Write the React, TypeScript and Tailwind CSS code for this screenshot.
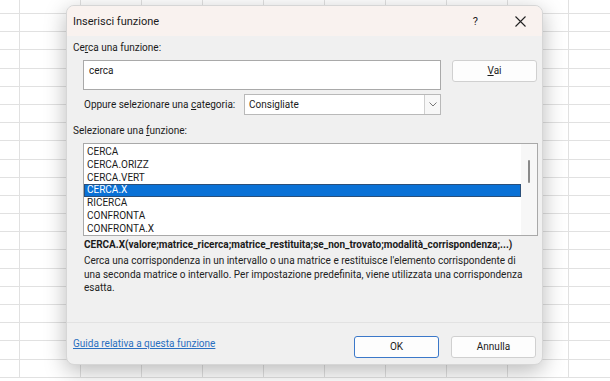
import React from "react";

const FONT = "font-['Segoe_UI','Roboto','Noto_Sans',sans-serif]";

const functions = [
  "CERCA",
  "CERCA.ORIZZ",
  "CERCA.VERT",
  "CERCA.X",
  "RICERCA",
  "CONFRONTA",
  "CONFRONTA.X",
];

const SELECTED = "CERCA.X";

// worksheet behind the dialog
const COLS = [20, 61, 61, 61, 61, 61, 61, 61, 61, 61, 61];
const ROWS = 21;

const Sheet: React.FC = () => (
  <div className="flex flex-col w-full h-full">
    {Array.from({ length: ROWS }).map((_, r) => (
      <div key={r} className={`flex shrink-0 ${r === 0 ? "h-[14px]" : "h-[18.2px]"}`}>
        {COLS.map((w, c) => (
          <div
            key={c}
            className="shrink-0 h-full border-r border-b border-[#e1e1e1]"
            style={{ width: w }}
          />
        ))}
      </div>
    ))}
  </div>
);

const App: React.FC = () => {
  return (
    <div className={`relative w-[610px] h-[381px] overflow-hidden bg-white text-[#1b1b1b] ${FONT}`}>
      <Sheet />

      {/* dialog over the worksheet */}
      <div className="absolute left-[66px] top-[5px] w-[477px] h-[360px] rounded-[8px] bg-[#f0f0f0] border border-[#d6d6d6] shadow-[0_6px_22px_rgba(0,0,0,0.28)] overflow-hidden flex flex-col">
        <div className="h-[30px] shrink-0 bg-[#f9f2ef] flex items-center pl-[6px]">
          <span className="text-[11px] leading-none">Inserisci funzione</span>
          <span className="ml-auto text-[11px] leading-none mr-[37px]">?</span>
          <svg width="11" height="11" viewBox="0 0 11 11" className="mr-[16px]">
            <path d="M0.5 0.5 L10.5 10.5 M10.5 0.5 L0.5 10.5" stroke="#222" strokeWidth="1.1" />
          </svg>
        </div>

        <div className="flex-1 flex flex-col pl-[6px] text-[10px]">
          <div className="mt-[4px] h-[16px] leading-[16px]">
            Ce<span className="underline">r</span>ca una funzione:
          </div>

          <div className="mt-[4px] flex items-start">
            <div className="ml-[10px] w-[358px] h-[30px] bg-white border border-[#a9a9a9] px-[5px] pt-[3px] leading-[14px]">
              cerca
            </div>
            <button className="ml-[11px] w-[85px] h-[22px] rounded-[3px] bg-[#fdfdfd] border border-[#d0d0d0] leading-none">
              <span className="underline">V</span>ai
            </button>
          </div>

          <div className="mt-[4px] flex items-center">
            <span className="ml-[11px] w-[160px] whitespace-nowrap">
              Oppure selezionare una <span className="underline">c</span>ategoria:
            </span>
            <div className="w-[197px] h-[21px] bg-white border border-[#b9b9b9] flex items-center">
              <span className="pl-[4px]">Consigliate</span>
              <div className="ml-auto w-[16px] h-full border-l border-[#cfcfcf] bg-[#f7f7f7] flex items-center justify-center">
                <svg width="8" height="5" viewBox="0 0 8 5">
                  <path d="M0.5 0.5 L4 4 L7.5 0.5" fill="none" stroke="#777" strokeWidth="1" />
                </svg>
              </div>
            </div>
          </div>

          <div className="mt-[8px] h-[16px] leading-[16px]">
            Selezionare una <span className="underline">f</span>unzione:
          </div>

          <div className="mt-[4px] ml-[10px] w-[455px] h-[93px] bg-white border border-[#a9a9a9] flex">
            <div className="flex-1 pt-[2px]">
              {functions.map((f) => (
                <div
                  key={f}
                  className={`h-[12.8px] leading-[12.8px] pl-[3px] ${
                    f === SELECTED ? "bg-[#0a71d6] text-white shadow-[inset_0_0_0_1px_#2a4f7a]" : ""
                  }`}
                >
                  {f}
                </div>
              ))}
            </div>
            <div className="w-[16px] bg-[#f7f7f7] flex justify-center pt-[16px]">
              <div className="w-[2px] h-[23px] bg-[#8a8a8a] rounded-full" />
            </div>
          </div>

          <div className="mt-[2px] ml-[11px] font-bold leading-[14px] whitespace-nowrap">
            CERCA.X(valore;matrice_ricerca;matrice_restituita;se_non_trovato;modalità_corrispondenza;...)
          </div>
          <div className="mt-[2px] ml-[11px] w-[440px] leading-[13.6px] text-[#222]">
            Cerca una corrispondenza in un intervallo o una matrice e restituisce l'elemento corrispondente di
            una seconda matrice o intervallo. Per impostazione predefinita, viene utilizzata una corrispondenza
            esatta.
          </div>

          <div className="mt-auto -ml-[6px] h-[42px] border-t border-[#e2e2e2] flex items-start pl-[6px] pt-[13px]">
            <a className="text-[#2a6fc0] underline leading-[16px]">Guida relativa a questa funzione</a>
            <button className="ml-auto w-[85px] h-[22px] rounded-[3px] bg-[#fdfdfd] border border-[#3b78c9] leading-none">
              OK
            </button>
            <button className="ml-[12px] mr-[6px] w-[85px] h-[22px] rounded-[3px] bg-[#fdfdfd] border border-[#d0d0d0] leading-none">
              Annulla
            </button>
          </div>
        </div>
      </div>
    </div>
  );
};

export default App;
